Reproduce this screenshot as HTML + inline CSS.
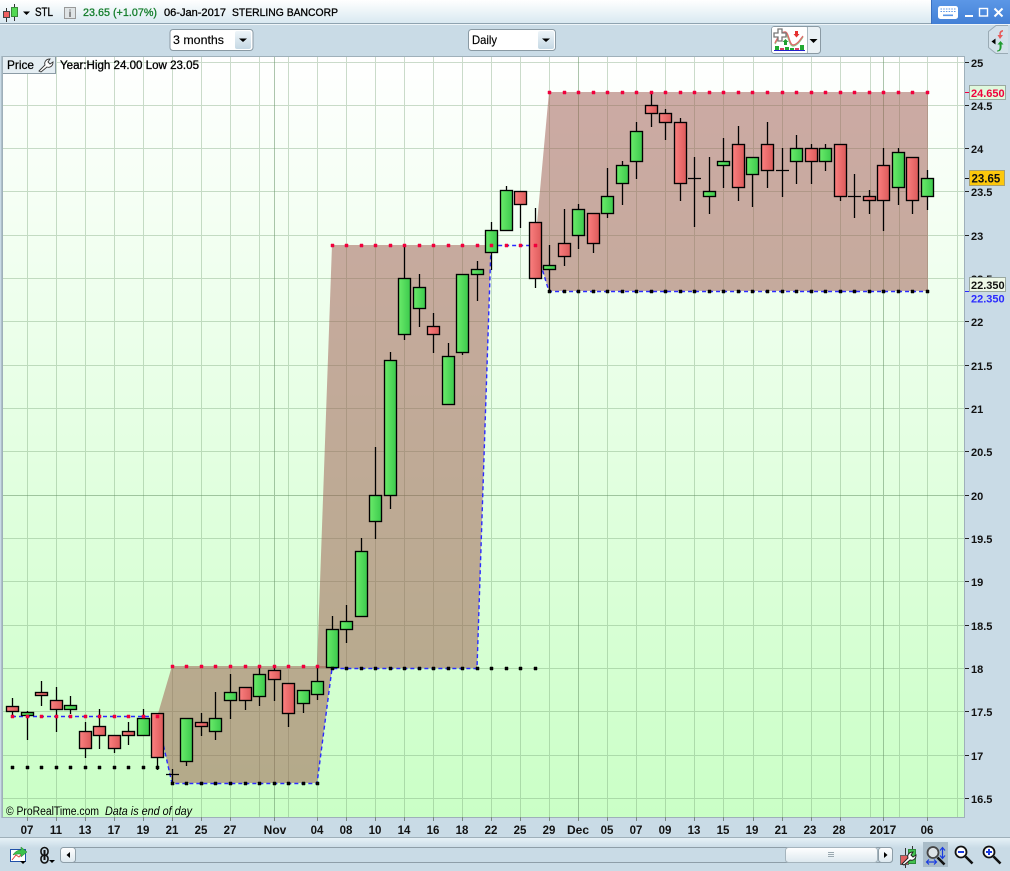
<!DOCTYPE html>
<html><head><meta charset="utf-8"><style>
html,body{margin:0;padding:0;width:1010px;height:871px;overflow:hidden;background:#c9dbe6}
svg{display:block;position:absolute;left:0;top:0}
text{font-family:"Liberation Sans",sans-serif;fill:#000}
.b{font-weight:bold}
.ax{font-size:11.5px;font-weight:bold;fill:#111}
.r{fill:url(#rg);stroke:#000;stroke-width:1.35}
.g{fill:url(#gg);stroke:#000;stroke-width:1.35}
</style></head><body>
<svg width="1010" height="871" viewBox="0 0 1010 871">
<defs>
<linearGradient id="top" x1="0" y1="0" x2="0" y2="1"><stop offset="0" stop-color="#fff"/><stop offset="1" stop-color="#d9e9f1"/></linearGradient>
<linearGradient id="bot" x1="0" y1="0" x2="0" y2="1"><stop offset="0" stop-color="#e6f1f7"/><stop offset="1" stop-color="#c9dbe6"/></linearGradient>
<linearGradient id="bg" x1="0" y1="0" x2="0" y2="1"><stop offset="0" stop-color="#fff"/><stop offset="1" stop-color="#caffc6"/></linearGradient>
<linearGradient id="win" x1="0" y1="0" x2="0" y2="1"><stop offset="0" stop-color="#5c97e6"/><stop offset="1" stop-color="#4280d6"/></linearGradient>
<linearGradient id="rg" x1="0" y1="0" x2="1" y2="0"><stop offset="0" stop-color="#fb8080"/><stop offset="1" stop-color="#dc5a5a"/></linearGradient>
<linearGradient id="gg" x1="0" y1="0" x2="1" y2="0"><stop offset="0" stop-color="#6aec6a"/><stop offset="1" stop-color="#3cc94d"/></linearGradient>
<linearGradient id="btn" x1="0" y1="0" x2="0" y2="1"><stop offset="0" stop-color="#fff"/><stop offset="1" stop-color="#dce8ef"/></linearGradient>
<linearGradient id="dd" x1="0" y1="0" x2="0" y2="1"><stop offset="0" stop-color="#eef5f9"/><stop offset="1" stop-color="#c5d8e4"/></linearGradient>
</defs>

<!-- top bar -->
<rect x="0" y="0" width="1010" height="23" fill="url(#top)"/>
<rect x="0" y="23" width="1010" height="1" fill="#8fa3b0"/>
<rect x="0" y="24" width="1010" height="1" fill="#eef5f9"/>
<rect x="931" y="0" width="79" height="24" fill="url(#win)"/>
<rect x="931" y="0" width="1" height="24" fill="#3a70c0"/>
<!-- keyboard -->
<rect x="938" y="6" width="20" height="13" rx="2.5" fill="#fff"/>
<path d="M940.500 9h15M940.500 11.500h15" stroke="#5c97e6" stroke-dasharray="1.5 1.2" fill="none"/>
<rect x="943" y="14.500" width="10" height="1.600" fill="#5c97e6"/>
<rect x="965" y="15" width="8" height="2" fill="#fff"/>
<rect x="979.500" y="8.500" width="8" height="7.500" fill="none" stroke="#fff" stroke-width="1.400"/>
<path d="M994.500 8.500l8 8M1002.500 8.500l-8 8" stroke="#fff" stroke-width="2" fill="none"/>
<!-- top-left icons -->
<path d="M6.500 8v14M14.500 4v17" stroke="#333" fill="none"/>
<rect x="3.500" y="11.500" width="6" height="6" fill="#f06060" stroke="#444"/>
<rect x="11.500" y="7.500" width="6" height="9" fill="#52d852" stroke="#3a8a3a"/>
<path d="M23 11.500h7l-3.500 3.500z" fill="#000"/>
<rect x="64.500" y="7.500" width="11" height="11" fill="#dfe4e6" stroke="#999"/>
<text x="70" y="17" font-size="10" text-anchor="middle" class="b" style="fill:#666">i</text>
<text x="35" y="16" font-size="11.500" textLength="18" lengthAdjust="spacingAndGlyphs" style="stroke:#000;stroke-width:.3">STL</text>
<text x="83" y="16" font-size="11" textLength="74" lengthAdjust="spacingAndGlyphs" style="fill:#137d2b;stroke:#137d2b;stroke-width:.3">23.65 (+1.07%)</text>
<text x="164" y="16" font-size="11" textLength="62" lengthAdjust="spacingAndGlyphs" style="stroke:#000;stroke-width:.3">06-Jan-2017</text>
<text x="232" y="16" font-size="11" textLength="106" lengthAdjust="spacingAndGlyphs" style="stroke:#000;stroke-width:.3">STERLING BANCORP</text>

<!-- dropdowns -->
<rect x="170" y="29.500" width="83" height="21" rx="3" fill="#fff" stroke="#8a9aa4"/>
<rect x="235" y="31" width="16" height="18" rx="2" fill="url(#dd)"/>
<path d="M239 38.500h8l-4 3.500z" fill="#000"/>
<text x="173" y="44" font-size="12" textLength="51" lengthAdjust="spacingAndGlyphs" style="stroke:#000;stroke-width:.15">3 months</text>
<rect x="468.500" y="29.500" width="87" height="21" rx="3" fill="#fff" stroke="#8a9aa4"/>
<rect x="538" y="31" width="16" height="18" rx="2" fill="url(#dd)"/>
<path d="M542 38.500h8l-4 3.500z" fill="#000"/>
<text x="472" y="44" font-size="12" textLength="25" lengthAdjust="spacingAndGlyphs" style="stroke:#000;stroke-width:.15">Daily</text>

<!-- indicator button -->
<rect x="771.500" y="26.500" width="49" height="27" rx="3" fill="#eaf1f5" stroke="#8a9aa4"/>
<rect x="772" y="27" width="35" height="26" rx="2" fill="#fff"/>
<path d="M807.500 27v26" stroke="#aab8c0"/>
<path d="M775 44c3-6 6-11 10-10s4 12 8 12 7-5 10-9" stroke="#8ccf8c" stroke-width="1.400" fill="none"/>
<path d="M775 43c3-6 6-11 10-11s4 13 8 13 7-5 10-9" stroke="#e06a6a" stroke-width="1.400" fill="none"/>
<path d="M778 29h4v4h4v4h-4v4h-4v-4h-4v-4h4z" fill="#fff" stroke="#777" stroke-width="1.300"/>
<path d="M785.500 39l3 3h-1.500v3h-3v-3h-1.500z" fill="#1fa02f"/>
<path d="M795 31h3v3h1.500l-3 3.500-3-3.500h1.500z" fill="#e53030"/>
<path d="M775 46h4v4h-4zM785 47h4v3h-4zM790 48h4v2h-4zM800 45h4v5h-4z" fill="#22aa33"/>
<path d="M780 48h4v2h-4zM795 48h4v2h-4z" fill="#d84060"/>
<rect x="774" y="50" width="31" height="1" fill="#2222cc"/>
<path d="M809.500 39h8l-4 4z" fill="#000"/>

<!-- side tab -->
<path d="M1008 25.500h-12l-7.500 6v16l7.500 6h12" fill="#d3e1ea" stroke="#9aabb5"/>
<path d="M991.500 41.500l4-3v6z" fill="#000"/>
<path d="M1003 30c-3 .5-4 2-3.500 5h-2l2.500 4 3-4h-2c-.5-2 .5-3 2-3.500z" fill="#e85a5a"/>
<path d="M997 50.500c2 0 3-1 2.500-6h-2l3-3.500 3 3.500h-2c.5 5-1 7-4.500 7z" fill="#1e9a2e"/>

<!-- chart area -->
<rect x="1" y="56" width="2" height="762" fill="#aebfca"/>
<rect x="3" y="57" width="961" height="760" fill="url(#bg)"/>

<!-- grid -->
<path shape-rendering="crispEdges" stroke="#709c70" stroke-opacity=".36" fill="none" d="M27.500 57v760M56.500 57v760M85.500 57v760M114.500 57v760M143.500 57v760M172.500 57v760M201.500 57v760M230.500 57v760M259.500 57v760M288.500 57v760M317.500 57v760M346.500 57v760M375.500 57v760M404.500 57v760M433.500 57v760M462.500 57v760M491.500 57v760M520.500 57v760M549.500 57v760M607.500 57v760M636.500 57v760M665.500 57v760M694.500 57v760M723.500 57v760M753.500 57v760M782.500 57v760M811.500 57v760M840.500 57v760M870.500 57v760M899.500 57v760M927.500 57v760M957.500 57v760
M3 62.500h961M3 105.500h961M3 148.500h961M3 191.500h961M3 235.500h961M3 278.500h961M3 321.500h961M3 365.500h961M3 408.500h961M3 451.500h961M3 538.500h961M3 581.500h961M3 625.500h961M3 668.500h961M3 711.500h961M3 755.500h961M3 798.500h961"/>
<path shape-rendering="crispEdges" stroke="#6a966a" stroke-opacity=".55" fill="none" d="M274.500 57v760M578.500 57v760M883.500 57v760M3 495.500h961"/>

<!-- zones -->
<path fill="#9b554b" fill-opacity=".5" d="M172 666H332V668H317.500L332 668 317 783H172L157 717z"/>
<path fill="#9b554b" fill-opacity=".5" d="M332 245H491L477 668H332L317 668z"/>
<path fill="#9b554b" fill-opacity=".5" d="M549 92H928V291H549L535 245z"/>

<!-- dashed line -->
<path fill="none" stroke="#2a2aff" stroke-width="1.400" stroke-dasharray="4 3" d="M12 716.500H157L172 783.500H317L332 668.500H477L491 245.500H535L549 291.500H928"/>

<!-- wicks -->
<path stroke="#000" stroke-width="1.300" fill="none" d="M12.500 698V717M27.500 711V740M41.500 681V706M56.500 687V732M70.500 696V714M85.500 722V758M99.500 709V749M114.500 735V753M128.500 722V745M143.500 709V735M157.500 713V770M172.500 769V784M186.500 718V766M201.500 713V736M215.500 692V740M230.500 674V719M245.500 687V710M259.500 667V706M274.500 667V701M288.500 683V727M303.500 690V713M317.500 667V700M332.500 616V668M346.500 605V643M361.500 538V616M375.500 447V539M390.500 352V509M404.500 247V340M419.500 274V327M433.500 313V353M448.500 343V404M462.500 274V355M477.500 261V301M491.500 222V270M506.500 186V231M520.500 191V228M535.500 208V288M549.500 245V291M564.500 209V266M578.500 204V249M593.500 213V253M607.500 168V218M622.500 161V205M636.500 122V179M651.500 94V127M665.500 109V140M680.500 118V201M694.500 157V227M709.500 157V214M723.500 138V188M738.500 126V201M752.500 157V207M767.500 122V188M782.500 148V197M796.500 135V184M811.500 144V184M825.500 144V171M840.500 144V201M854.500 174V218M869.500 190V214M883.500 148V231M898.500 148V205M912.500 157V214M927.500 170V210
M166 774.500H179M688 178.500H701M776 170.500H789M848 196.500H861"/>

<!-- bodies -->
<g>
<rect class="r" x="6.500" y="706.500" width="12" height="5"/>
<rect class="g" x="21.500" y="712.500" width="12" height="3"/>
<rect class="r" x="35.500" y="692.500" width="12" height="3"/>
<rect class="r" x="50.500" y="700.500" width="12" height="9"/>
<rect class="g" x="64.500" y="705.500" width="12" height="4"/>
<rect class="r" x="79.500" y="731.500" width="12" height="17"/>
<rect class="r" x="93.500" y="726.500" width="12" height="9"/>
<rect class="r" x="108.500" y="735.500" width="12" height="13"/>
<rect class="r" x="122.500" y="731.500" width="12" height="4"/>
<rect class="g" x="137.500" y="718.500" width="12" height="17"/>
<rect class="r" x="151.500" y="713.500" width="12" height="44"/>
<rect class="g" x="180.500" y="718.500" width="12" height="43"/>
<rect class="r" x="195.500" y="722.500" width="12" height="4"/>
<rect class="g" x="209.500" y="718.500" width="12" height="13"/>
<rect class="g" x="224.500" y="692.500" width="12" height="8"/>
<rect class="r" x="239.500" y="687.500" width="12" height="13"/>
<rect class="g" x="253.500" y="674.500" width="12" height="22"/>
<rect class="r" x="268.500" y="670.500" width="12" height="9"/>
<rect class="r" x="282.500" y="683.500" width="12" height="30"/>
<rect class="g" x="297.500" y="690.500" width="12" height="13"/>
<rect class="g" x="311.500" y="681.500" width="12" height="13"/>
<rect class="g" x="326.500" y="629.500" width="12" height="38"/>
<rect class="g" x="340.500" y="621.500" width="12" height="8"/>
<rect class="g" x="355.500" y="551.500" width="12" height="65"/>
<rect class="g" x="369.500" y="495.500" width="12" height="26"/>
<rect class="g" x="384.500" y="360.500" width="12" height="135"/>
<rect class="g" x="398.500" y="278.500" width="12" height="56"/>
<rect class="g" x="413.500" y="287.500" width="12" height="21"/>
<rect class="r" x="427.500" y="326.500" width="12" height="8"/>
<rect class="g" x="442.500" y="356.500" width="12" height="48"/>
<rect class="g" x="456.500" y="274.500" width="12" height="78"/>
<rect class="g" x="471.500" y="269.500" width="12" height="5"/>
<rect class="g" x="485.500" y="230.500" width="12" height="22"/>
<rect class="g" x="500.500" y="190.500" width="12" height="40"/>
<rect class="r" x="514.500" y="191.500" width="12" height="13"/>
<rect class="r" x="529.500" y="222.500" width="12" height="56"/>
<rect class="g" x="543.500" y="265.500" width="12" height="4"/>
<rect class="r" x="558.500" y="243.500" width="12" height="13"/>
<rect class="g" x="572.500" y="209.500" width="12" height="26"/>
<rect class="r" x="587.500" y="213.500" width="12" height="30"/>
<rect class="g" x="601.500" y="196.500" width="12" height="17"/>
<rect class="g" x="616.500" y="165.500" width="12" height="18"/>
<rect class="g" x="630.500" y="131.500" width="12" height="30"/>
<rect class="r" x="645.500" y="105.500" width="12" height="8"/>
<rect class="r" x="659.500" y="113.500" width="12" height="9"/>
<rect class="r" x="674.500" y="122.500" width="12" height="61"/>
<rect class="g" x="703.500" y="191.500" width="12" height="5"/>
<rect class="g" x="717.500" y="161.500" width="12" height="4"/>
<rect class="r" x="732.500" y="144.500" width="12" height="43"/>
<rect class="g" x="746.500" y="157.500" width="12" height="17"/>
<rect class="r" x="761.500" y="144.500" width="12" height="26"/>
<rect class="g" x="790.500" y="148.500" width="12" height="13"/>
<rect class="r" x="805.500" y="148.500" width="12" height="13"/>
<rect class="g" x="819.500" y="148.500" width="12" height="13"/>
<rect class="r" x="834.500" y="144.500" width="12" height="52"/>
<rect class="r" x="863.500" y="196.500" width="12" height="4"/>
<rect class="r" x="877.500" y="165.500" width="12" height="35"/>
<rect class="g" x="892.500" y="152.500" width="12" height="35"/>
<rect class="r" x="906.500" y="157.500" width="12" height="43"/>
<rect class="g" x="921.500" y="178.500" width="12" height="18"/>
</g>

<!-- dots -->
<path stroke="#f0003c" stroke-width=".5" fill="#f0003c" d="M11 715h3v3h-3zM26 715h3v3h-3zM40 715h3v3h-3zM55 715h3v3h-3zM69 715h3v3h-3zM84 715h3v3h-3zM98 715h3v3h-3zM113 715h3v3h-3zM127 715h3v3h-3zM142 715h3v3h-3zM156 715h3v3h-3z
M171 665h3v3h-3zM185 665h3v3h-3zM200 665h3v3h-3zM214 665h3v3h-3zM229 665h3v3h-3zM244 665h3v3h-3zM258 665h3v3h-3zM273 665h3v3h-3zM287 665h3v3h-3zM302 665h3v3h-3zM316 665h3v3h-3z
M331 244h3v3h-3zM345 244h3v3h-3zM360 244h3v3h-3zM374 244h3v3h-3zM389 244h3v3h-3zM403 244h3v3h-3zM418 244h3v3h-3zM432 244h3v3h-3zM447 244h3v3h-3zM461 244h3v3h-3zM476 244h3v3h-3zM490 244h3v3h-3zM505 244h3v3h-3zM519 244h3v3h-3zM534 244h3v3h-3z
M548 91h3v3h-3zM563 91h3v3h-3zM577 91h3v3h-3zM592 91h3v3h-3zM606 91h3v3h-3zM621 91h3v3h-3zM635 91h3v3h-3zM650 91h3v3h-3zM664 91h3v3h-3zM679 91h3v3h-3zM693 91h3v3h-3zM708 91h3v3h-3zM722 91h3v3h-3zM737 91h3v3h-3zM751 91h3v3h-3zM766 91h3v3h-3zM781 91h3v3h-3zM795 91h3v3h-3zM810 91h3v3h-3zM824 91h3v3h-3zM839 91h3v3h-3zM853 91h3v3h-3zM868 91h3v3h-3zM882 91h3v3h-3zM897 91h3v3h-3zM911 91h3v3h-3zM926 91h3v3h-3z"/>
<path stroke="#000" stroke-width=".5" fill="#000" d="M11 766h3v3h-3zM26 766h3v3h-3zM40 766h3v3h-3zM55 766h3v3h-3zM69 766h3v3h-3zM84 766h3v3h-3zM98 766h3v3h-3zM113 766h3v3h-3zM127 766h3v3h-3zM142 766h3v3h-3zM156 766h3v3h-3z
M171 782h3v3h-3zM185 782h3v3h-3zM200 782h3v3h-3zM214 782h3v3h-3zM229 782h3v3h-3zM244 782h3v3h-3zM258 782h3v3h-3zM273 782h3v3h-3zM287 782h3v3h-3zM302 782h3v3h-3zM316 782h3v3h-3z
M331 667h3v3h-3zM345 667h3v3h-3zM360 667h3v3h-3zM374 667h3v3h-3zM389 667h3v3h-3zM403 667h3v3h-3zM418 667h3v3h-3zM432 667h3v3h-3zM447 667h3v3h-3zM461 667h3v3h-3zM476 667h3v3h-3zM490 667h3v3h-3zM505 667h3v3h-3zM519 667h3v3h-3zM534 667h3v3h-3z
M548 290h3v3h-3zM563 290h3v3h-3zM577 290h3v3h-3zM592 290h3v3h-3zM606 290h3v3h-3zM621 290h3v3h-3zM635 290h3v3h-3zM650 290h3v3h-3zM664 290h3v3h-3zM679 290h3v3h-3zM693 290h3v3h-3zM708 290h3v3h-3zM722 290h3v3h-3zM737 290h3v3h-3zM751 290h3v3h-3zM766 290h3v3h-3zM781 290h3v3h-3zM795 290h3v3h-3zM810 290h3v3h-3zM824 290h3v3h-3zM839 290h3v3h-3zM853 290h3v3h-3zM868 290h3v3h-3zM882 290h3v3h-3zM897 290h3v3h-3zM911 290h3v3h-3zM926 290h3v3h-3z"/>

<!-- chart frame -->
<rect x="2.500" y="56.500" width="962" height="761" fill="none" stroke="#9fb0ba"/>

<!-- price tab -->
<path d="M3 57h52v16H3z" fill="#e5eef3"/>
<path d="M55.500 57v16.500H3" fill="none" stroke="#8c9ca6"/>
<text x="7" y="69" font-size="12" textLength="27" lengthAdjust="spacingAndGlyphs" style="stroke:#000;stroke-width:.25">Price</text>
<path d="M39 71l6-6c-1-3 1-6 5-6l-2 3 2 2 3-2c0 4-3 6-6 5l-6 5z" fill="#fff" stroke="#333" stroke-width=".9"/>
<text x="60" y="69" font-size="11.500" textLength="139" lengthAdjust="spacingAndGlyphs" style="stroke:#000;stroke-width:.3">Year:High 24.00 Low 23.05</text>
<text x="6" y="815" font-size="11.500" textLength="93" lengthAdjust="spacingAndGlyphs">© ProRealTime.com</text>
<text x="105" y="815" font-size="11.500" font-style="italic" textLength="87" lengthAdjust="spacingAndGlyphs">Data is end of day</text>

<!-- y axis -->
<path shape-rendering="crispEdges" stroke="#222" fill="none" d="M965 62.500h4M965 105.500h4M965 148.500h4M965 191.500h4M965 235.500h4M965 321.500h4M965 365.500h4M965 408.500h4M965 451.500h4M965 495.500h4M965 538.500h4M965 581.500h4M965 625.500h4M965 668.500h4M965 711.500h4M965 755.500h4M965 798.500h4"/>
<path shape-rendering="crispEdges" stroke="#f0003c" d="M965 92.500h4"/>
<path shape-rendering="crispEdges" stroke="#2a2aff" d="M965 291.500h4"/>
<path shape-rendering="crispEdges" stroke="#111" d="M965 178.500h4"/>
<g style="font-size:11px">
<text class="ax" x="971" y="67" style="font-size:11px">25</text>
<text class="ax" x="971" y="110" style="font-size:11px">24.5</text>
<text class="ax" x="971" y="153" style="font-size:11px">24</text>
<text class="ax" x="971" y="196" style="font-size:11px">23.5</text>
<text class="ax" x="971" y="240" style="font-size:11px">23</text>
<text class="ax" x="971" y="283" style="font-size:11px">22.5</text>
<text class="ax" x="971" y="326" style="font-size:11px">22</text>
<text class="ax" x="971" y="370" style="font-size:11px">21.5</text>
<text class="ax" x="971" y="413" style="font-size:11px">21</text>
<text class="ax" x="971" y="456" style="font-size:11px">20.5</text>
<text class="ax" x="971" y="500" style="font-size:11px">20</text>
<text class="ax" x="971" y="543" style="font-size:11px">19.5</text>
<text class="ax" x="971" y="586" style="font-size:11px">19</text>
<text class="ax" x="971" y="630" style="font-size:11px">18.5</text>
<text class="ax" x="971" y="673" style="font-size:11px">18</text>
<text class="ax" x="971" y="716" style="font-size:11px">17.5</text>
<text class="ax" x="971" y="760" style="font-size:11px">17</text>
<text class="ax" x="971" y="803" style="font-size:11px">16.5</text>
</g>
<rect x="969.500" y="85.500" width="36" height="14" fill="#dff8dc" stroke="#9aa8a0"/>
<text class="ax" x="971" y="97" style="font-size:11px;fill:#f0003c">24.650</text>
<rect x="969.500" y="170.500" width="35" height="15" fill="#fdc80c" stroke="#a8a070"/>
<text class="ax" x="971.500" y="182.500" style="font-size:11.500px">23.65</text>
<rect x="969.500" y="277.500" width="36" height="14" fill="#eef8e8" stroke="#9aa8a0"/>
<text class="ax" x="971" y="289" style="font-size:11px">22.350</text>
<text class="ax" x="971" y="302.500" style="font-size:11px;fill:#2a2aff">22.350</text>

<!-- x axis ticks -->
<path shape-rendering="crispEdges" stroke="#7a8a80" fill="none" d="M27.500 817v4M56.500 817v4M85.500 817v4M114.500 817v4M143.500 817v4M172.500 817v4M201.500 817v4M230.500 817v4M274.500 817v4M317.500 817v4M346.500 817v4M375.500 817v4M404.500 817v4M433.500 817v4M462.500 817v4M491.500 817v4M520.500 817v4M549.500 817v4M578.500 817v4M607.500 817v4M636.500 817v4M665.500 817v4M694.500 817v4M723.500 817v4M753.500 817v4M782.500 817v4M811.500 817v4M840.500 817v4M883.500 817v4M927.500 817v4"/>
<g text-anchor="middle">
<text class="ax" x="27" y="834">07</text><text class="ax" x="56" y="834">11</text><text class="ax" x="85" y="834">13</text><text class="ax" x="114" y="834">17</text><text class="ax" x="143" y="834">19</text><text class="ax" x="172" y="834">21</text><text class="ax" x="201" y="834">25</text><text class="ax" x="230" y="834">27</text>
<text class="ax" x="275" y="834" style="font-size:12px">Nov</text>
<text class="ax" x="317" y="834">04</text><text class="ax" x="346" y="834">08</text><text class="ax" x="375" y="834">10</text><text class="ax" x="404" y="834">14</text><text class="ax" x="433" y="834">16</text><text class="ax" x="462" y="834">18</text><text class="ax" x="491" y="834">22</text><text class="ax" x="520" y="834">25</text><text class="ax" x="549" y="834">29</text>
<text class="ax" x="578" y="834" style="font-size:12px">Dec</text>
<text class="ax" x="607" y="834">05</text><text class="ax" x="636" y="834">07</text><text class="ax" x="665" y="834">09</text><text class="ax" x="694" y="834">13</text><text class="ax" x="723" y="834">15</text><text class="ax" x="752" y="834">19</text><text class="ax" x="781" y="834">21</text><text class="ax" x="810" y="834">23</text><text class="ax" x="839" y="834">28</text>
<text class="ax" x="883" y="834" style="font-size:12px">2017</text>
<text class="ax" x="927" y="834">06</text>
</g>

<!-- bottom bar -->
<rect x="0" y="838" width="1010" height="33" fill="#c9dbe6"/>
<rect x="0" y="838" width="1010" height="10" fill="url(#bot)"/>
<rect x="0" y="837" width="1010" height="1" fill="#9fb0ba"/>
<!-- left icons -->
<rect x="10.500" y="849.500" width="15" height="12" fill="#fff" stroke="#2050a8"/>
<path d="M12 860l4-5 3 2 4-5" stroke="#e04040" fill="none"/>
<path d="M13 855c2-4 6-5 8-5v-3l6 5-6 5v-3c-3 0-6 0-8 1z" fill="#3cc24c" stroke="#1e7a2c" stroke-width=".5"/>
<path d="M20 861h6l-3 3z" fill="#000"/>
<g fill="none" stroke="#111" stroke-width="1.600"><rect x="41" y="847.500" width="7" height="8" rx="3.500"/><rect x="41" y="855" width="7" height="8" rx="3.500"/></g>
<path d="M44.500 850v10" stroke="#111" stroke-width="2"/>
<path d="M49 860h6l-3 3z" fill="#000"/>
<!-- scrollbar -->
<rect x="62.500" y="847.500" width="830" height="15" rx="3" fill="#c9dbe6" stroke="#8e9ea8"/>
<rect x="60.500" y="847.500" width="15" height="15" rx="3" fill="url(#btn)" stroke="#8e9ea8"/>
<path d="M70 852v6l-3.500-3z" fill="#000"/>
<rect x="785.500" y="847.500" width="92" height="15" rx="3" fill="url(#btn)" stroke="#a5b4bd"/>
<path d="M828 852.500h6M828 854.500h6M828 856.500h6" stroke="#9aa8b0"/>
<rect x="878.500" y="847.500" width="14" height="15" rx="3" fill="url(#btn)" stroke="#8e9ea8"/>
<path d="M884 852v6l3.500-3z" fill="#000"/>
<!-- wrench candle -->
<path d="M905.500 848v20M912.500 846v18" stroke="#333" fill="none"/>
<rect x="900.500" y="855.500" width="8" height="9" fill="#e06060" stroke="#666"/>
<rect x="908.500" y="849.500" width="7" height="14" fill="#43c24f" stroke="#2c8a3a"/>
<path d="M902 864l6-6c-1-3 1-6 5-6l-2 3 2 2 3-2c0 4-3 6-6 5l-6 5z" fill="#fff" stroke="#222" stroke-width="1"/>
<!-- zoom selected -->
<rect x="923" y="842" width="25" height="25" fill="#a9bcc8"/>
<circle cx="933" cy="852.500" r="5.500" fill="#dde3e6" stroke="#444" stroke-width="1.800"/>
<path d="M937.500 857.500l7 7" stroke="#111" stroke-width="2.600"/>
<path d="M942.500 848v10M940 850.500l2.500-3 2.500 3M940 855.500l2.500 3 2.500-3M927 862h9M929 859.500l-2.500 2.500 2.500 2.500M934 859.500l2.500 2.500-2.500 2.500" stroke="#1a3ce0" stroke-width="1.200" fill="none"/>
<!-- zoom out -->
<circle cx="961" cy="852" r="5.500" fill="#fff" stroke="#111" stroke-width="1.800"/>
<path d="M965.500 856.500l7 7" stroke="#111" stroke-width="2.600"/>
<path d="M958 852h6" stroke="#1a3ce0" stroke-width="2"/>
<!-- zoom in -->
<circle cx="989" cy="852" r="5.500" fill="#fff" stroke="#111" stroke-width="1.800"/>
<path d="M993.500 856.500l7 7" stroke="#111" stroke-width="2.600"/>
<path d="M986 852h6M989 849v6" stroke="#1a3ce0" stroke-width="2"/>
</svg>
</body></html>
